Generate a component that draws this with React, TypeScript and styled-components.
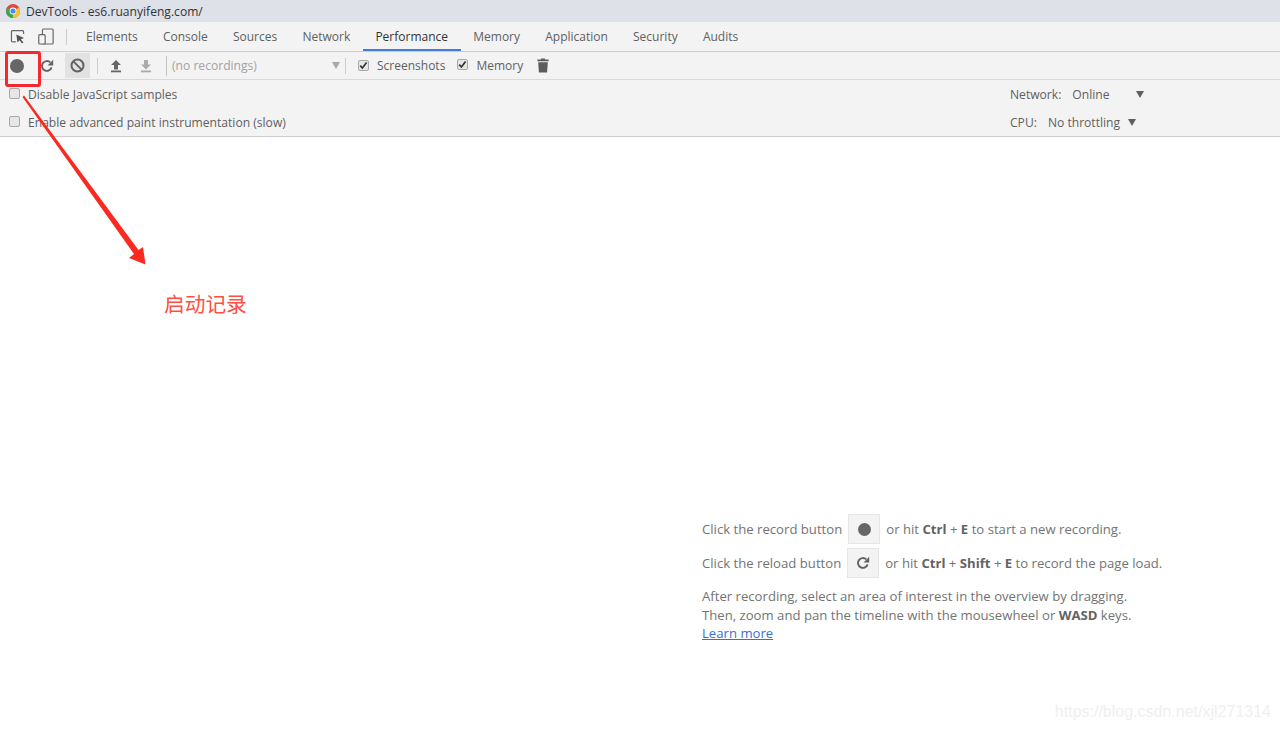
import React from "react";
import styled, { createGlobalStyle } from "styled-components";

const GlobalStyle = createGlobalStyle`
  html, body {
    margin: 0;
    padding: 0;
    background: #fff;
  }
  body {
    font-family: "Open Sans", "Noto Sans", "Liberation Sans", sans-serif;
    font-size: 12px;
    color: #5f5f5f;
  }
`;

const Page = styled.div`
  position: relative;
  width: 1280px;
  height: 730px;
  overflow: hidden;
  display: flex;
  flex-direction: column;
`;

const TitleBar = styled.div`
  height: 22px;
  flex: none;
  display: flex;
  align-items: center;
  gap: 6px;
  padding-left: 6px;
  background: #dee1e8;
  color: #333;
  font-size: 12.1px;
`;

const TabBar = styled.div`
  height: 29px;
  flex: none;
  display: flex;
  align-items: stretch;
  background: #f3f3f3;
  border-bottom: 1px solid #cfcfcf;
`;

const TabTools = styled.div`
  width: 67px;
  padding-left: 10px;
  box-sizing: border-box;
  display: flex;
  align-items: center;
  gap: 12px;
`;

const Divider = styled.span<{ $ml?: number; $auto?: boolean }>`
  width: 1px;
  height: 16px;
  background: #cdcdcd;
  flex: none;
  margin-left: ${(p) => (p.$auto ? "auto" : `${p.$ml ?? 0}px`)};
`;

const Tabs = styled.div`
  display: flex;
  margin-left: 6.5px;
`;

const Tab = styled.div<{ $active?: boolean }>`
  padding: 0 12.6px;
  display: flex;
  align-items: center;
  font-size: 12px;
  white-space: nowrap;
  color: ${(p) => (p.$active ? "#333" : "#5f5f5f")};
  box-shadow: ${(p) => (p.$active ? "inset 0 -2px 0 #3e7ce0" : "none")};
`;

const Toolbar = styled.div`
  height: 28px;
  flex: none;
  display: flex;
  align-items: center;
  padding-left: 4px;
  background: #f3f3f3;
  border-bottom: 1px solid #d9d9d9;
  box-sizing: border-box;
`;

const ToolButton = styled.div<{ $pressed?: boolean; $w: number; $ml?: number }>`
  width: ${(p) => p.$w}px;
  height: 25px;
  margin-left: ${(p) => p.$ml ?? 0}px;
  flex: none;
  display: flex;
  align-items: center;
  justify-content: center;
  background: ${(p) => (p.$pressed ? "#e2e2e2" : "transparent")};
`;

const Recordings = styled.div`
  width: 179px;
  height: 20px;
  margin-left: 8px;
  padding: 0 5px;
  box-sizing: border-box;
  flex: none;
  display: flex;
  align-items: center;
  justify-content: space-between;
  border-left: 1px solid #c4c4c4;
  color: #a3a3a3;
  font-size: 12.1px;
`;

const ToolCheck = styled.label<{ $gap: number; $ml: number }>`
  display: flex;
  align-items: center;
  gap: ${(p) => p.$gap}px;
  margin-left: ${(p) => p.$ml}px;
  font-size: 12px;
  white-space: nowrap;
`;

const Box = styled.span<{ $up?: number }>`
  width: 11px;
  height: 11px;
  flex: none;
  box-sizing: border-box;
  border: 1px solid #a8a8a8;
  border-radius: 2px;
  background: #e6e6e6;
  display: inline-flex;
  align-items: center;
  justify-content: center;
  margin-top: ${(p) => -(p.$up ?? 0)}px;
`;

const Settings = styled.div`
  height: 57px;
  flex: none;
  padding: 0 0 0 9px;
  box-sizing: border-box;
  display: grid;
  grid-template-rows: 28px 28px;
  background: #f3f3f3;
  border-bottom: 1px solid #cdcdcd;
`;

const SettingRow = styled.div`
  display: flex;
  align-items: center;
  font-size: 12.1px;
`;

const SettingCheck = styled.label`
  display: flex;
  align-items: center;
  gap: 8px;
  width: 1001px;
  flex: none;
`;

const Throttle = styled.div`
  display: flex;
  align-items: center;
`;

const ThrottleValue = styled.span<{ $ml: number; $w: number }>`
  margin-left: ${(p) => p.$ml}px;
  width: ${(p) => p.$w}px;
  white-space: nowrap;
`;

const Arrow = styled.span<{ $color?: string }>`
  width: 0;
  height: 0;
  border-left: 4px solid transparent;
  border-right: 4px solid transparent;
  border-top: 7px solid ${(p) => p.$color ?? "#5f5f5f"};
`;

const Landing = styled.main`
  flex: 1;
  display: flex;
  align-items: flex-start;
  padding: 377px 0 0 702px;
  background: #fff;
`;

const Help = styled.div`
  display: flex;
  flex-direction: column;
  font-size: 13.15px;
  line-height: 18.5px;
  color: #737373;
`;

const HelpLine = styled.div<{ $mb: number }>`
  display: flex;
  align-items: center;
  gap: 6px;
  height: 30px;
  margin-bottom: ${(p) => p.$mb}px;
  white-space: nowrap;
  b {
    color: #636363;
    font-weight: 700;
  }
`;

const HelpButton = styled.div`
  width: 32px;
  height: 30px;
  box-sizing: border-box;
  background: #f3f3f3;
  border: 1px solid #e6e6e6;
  display: flex;
  align-items: center;
  justify-content: center;
`;

const HelpText = styled.div`
  white-space: nowrap;
  b {
    color: #636363;
    font-weight: 700;
  }
`;

const LearnMore = styled.a`
  color: #3a6fd8;
  text-decoration: underline;
`;

const RedBox = styled.div`
  position: absolute;
  left: 5px;
  top: 51px;
  width: 36px;
  height: 36px;
  box-sizing: border-box;
  border: 3px solid #f5282d;
  border-radius: 3px;
`;

const ArrowLayer = styled.svg`
  position: absolute;
  left: 0;
  top: 0;
  pointer-events: none;
`;

const Note = styled.div`
  position: absolute;
  left: 164px;
  top: 290px;
  font-family: "Noto Sans CJK SC", sans-serif;
  font-size: 20.7px;
  line-height: 26px;
  color: #ff4f42;
`;

const Watermark = styled.div`
  position: absolute;
  right: 9px;
  top: 701px;
  font-family: "Liberation Sans", sans-serif;
  font-size: 16px;
  line-height: 22px;
  color: #efefef;
`;

const ChromeLogo = () => (
  <svg width="14" height="14" viewBox="0 0 14 14">
    <circle cx="7" cy="7" r="7" fill="#e0493c" />
    <path d="M7 7 L13.06 3.5 A7 7 0 0 1 7 14 Z" fill="#f7c32d" />
    <path d="M7 7 L7 14 A7 7 0 0 1 0.94 3.5 Z" fill="#37a852" />
    <circle cx="7" cy="7" r="3.4" fill="#fff" />
    <circle cx="7" cy="7" r="2.6" fill="#4a8af4" />
  </svg>
);

const InspectIcon = () => (
  <svg width="16" height="16" viewBox="0 0 16 16" fill="none">
    <path d="M6 13H2.5a1 1 0 0 1-1-1V2.5a1 1 0 0 1 1-1H13a1 1 0 0 1 1 1V5" stroke="#666" strokeWidth="1.2" />
    <path d="M6.5 5.5l8 3.6-3.3 1.1 2.6 3.6-1.5 1-2.4-3.5-2.2 2.4z" fill="#555" />
  </svg>
);

const DeviceIcon = () => (
  <svg width="17" height="17" viewBox="0 0 17 17" fill="none" stroke="#666" strokeWidth="1.2">
    <rect x="4.6" y="0.8" width="11" height="15.4" rx="1" />
    <rect x="0.8" y="6.6" width="6.6" height="9.6" rx="1" fill="#f3f3f3" />
  </svg>
);

const RecordDot = ({ size }: { size: number }) => (
  <svg width={size} height={size} viewBox="0 0 14 14">
    <circle cx="7" cy="7" r="7" fill="#666" />
  </svg>
);

const ReloadIcon = () => (
  <svg width="14" height="14" viewBox="0 0 14 14" fill="none">
    <path d="M11.6 8.4A4.9 4.9 0 1 1 10.3 3.4" stroke="#636363" strokeWidth="1.9" />
    <path d="M13.2 0.8V6.4H7.6z" fill="#636363" />
  </svg>
);

const ClearIcon = () => (
  <svg width="15" height="15" viewBox="0 0 15 15" fill="none" stroke="#636363" strokeWidth="2">
    <circle cx="7.5" cy="7.5" r="6" />
    <path d="M3.4 3.4l8.2 8.2" />
  </svg>
);

const LoadIcon = ({ color, down }: { color: string; down?: boolean }) => (
  <svg width="14" height="14" viewBox="0 0 14 14" fill={color}>
    {down ? <path d="M5 1h4v4.5h3L7 10.5 2 5.5h3z" /> : <path d="M7 1l5 5H9v4.5H5V6H2z" />}
    <rect x="2" y="11.5" width="10" height="1.8" />
  </svg>
);

const TrashIcon = () => (
  <svg width="12" height="15" viewBox="0 0 12 15" fill="#5c5c5c">
    <path d="M4.2 0.5h3.6l.5 1H11.6v1.8H0.4V1.5h3.3z" />
    <path d="M1.2 4.2h9.6l-.7 10.3H1.9z" />
  </svg>
);

const Check = () => (
  <svg width="9" height="9" viewBox="0 0 9 9" fill="none" stroke="#333" strokeWidth="1.7">
    <path d="M1.2 4.6l2.2 2.4 4.2-5.4" />
  </svg>
);

const TAB_NAMES = ["Elements", "Console", "Sources", "Network", "Performance", "Memory", "Application", "Security", "Audits"];

const App = () => {
  return (
    <Page>
      <GlobalStyle />
      <TitleBar>
        <ChromeLogo />
        <span>DevTools - es6.ruanyifeng.com/</span>
      </TitleBar>
      <TabBar>
        <TabTools>
          <InspectIcon />
          <DeviceIcon />
          <Divider $auto />
        </TabTools>
        <Tabs>
          {TAB_NAMES.map((name) => (
            <Tab key={name} $active={name === "Performance"}>
              {name}
            </Tab>
          ))}
        </Tabs>
      </TabBar>
      <Toolbar>
        <ToolButton $w={26}>
          <RecordDot size={14} />
        </ToolButton>
        <ToolButton $w={34}>
          <ReloadIcon />
        </ToolButton>
        <ToolButton $w={25} $ml={1} $pressed>
          <ClearIcon />
        </ToolButton>
        <Divider $ml={7} />
        <ToolButton $w={36}>
          <LoadIcon color="#666" />
        </ToolButton>
        <ToolButton $w={24}>
          <LoadIcon color="#aaa" down />
        </ToolButton>
        <Recordings>
          (no recordings)
          <Arrow $color="#a8a8a8" />
        </Recordings>
        <Divider />
        <ToolCheck $gap={8} $ml={12}>
          <Box>
            <Check />
          </Box>
          Screenshots
        </ToolCheck>
        <ToolCheck $gap={8} $ml={12}>
          <Box $up={2}>
            <Check />
          </Box>
          Memory
        </ToolCheck>
        <ToolButton $w={26} $ml={7}>
          <TrashIcon />
        </ToolButton>
      </Toolbar>
      <Settings>
        <SettingRow>
          <SettingCheck>
            <Box $up={2} />
            Disable JavaScript samples
          </SettingCheck>
          <Throttle>
            Network:
            <ThrottleValue $ml={11} $w={64}>
              Online
            </ThrottleValue>
            <Arrow />
          </Throttle>
        </SettingRow>
        <SettingRow>
          <SettingCheck>
            <Box $up={1} />
            Enable advanced paint instrumentation (slow)
          </SettingCheck>
          <Throttle>
            CPU:
            <ThrottleValue $ml={11} $w={80}>
              No throttling
            </ThrottleValue>
            <Arrow />
          </Throttle>
        </SettingRow>
      </Settings>
      <Landing>
        <Help>
          <HelpLine $mb={4}>
            Click the record button
            <HelpButton>
              <RecordDot size={13} />
            </HelpButton>
            <span>
              or hit <b>Ctrl</b> + <b>E</b> to start a new recording.
            </span>
          </HelpLine>
          <HelpLine $mb={9}>
            Click the reload button
            <HelpButton>
              <ReloadIcon />
            </HelpButton>
            <span>
              or hit <b>Ctrl</b> + <b>Shift</b> + <b>E</b> to record the page load.
            </span>
          </HelpLine>
          <HelpText>After recording, select an area of interest in the overview by dragging.</HelpText>
          <HelpText>
            Then, zoom and pan the timeline with the mousewheel or <b>WASD</b> keys.
          </HelpText>
          <HelpText>
            <LearnMore>Learn more</LearnMore>
          </HelpText>
        </Help>
      </Landing>
      <RedBox />
      <ArrowLayer width="160" height="270" viewBox="0 0 160 270">
        <path d="M22.5 97L24 95.5L138.5 250L143 247L145.5 264.5L129 258L134 254z" fill="#fb2a20" />
      </ArrowLayer>
      <Note>启动记录</Note>
      <Watermark>https://blog.csdn.net/xjl271314</Watermark>
    </Page>
  );
};

export default App;
